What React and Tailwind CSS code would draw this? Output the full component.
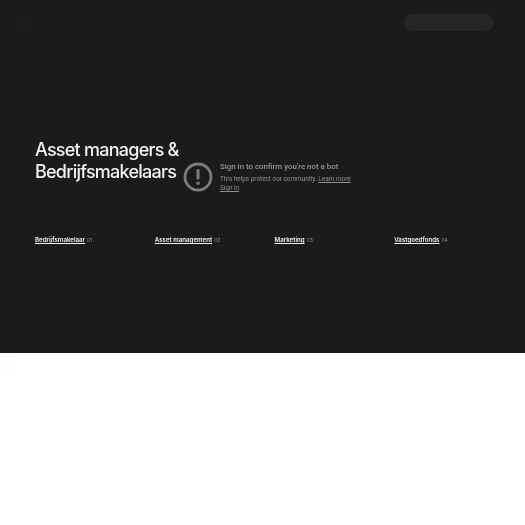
import React from 'react';

const tabs = [
    { label: 'Bedrijfsmakelaar', num: '01' },
    { label: 'Asset management', num: '02' },
    { label: 'Marketing', num: '03' },
    { label: 'Vastgoedfonds', num: '04' },
];

export default function App() {
    return (
        <div className="w-[525px] h-[525px] bg-white overflow-hidden font-['Inter',sans-serif]">
            <div className="h-[353px] bg-[#1b1b1b] flex flex-col">
                {/* Header */}
                <div className="flex justify-between items-start pt-[14px] pl-[16px] pr-[31px] h-[139px] shrink-0">
                    <div className="w-[20px] h-[20px] rounded-full bg-[#1d1d1d] blur-[2px]" />
                    <div className="w-[90px] h-[17px] rounded-full bg-[#262626] blur-[0.5px]" />
                </div>

                {/* Hero */}
                <div className="flex items-start pl-[35px] h-[96px] shrink-0">
                    <h1 className="text-[18px] leading-[22px] font-medium text-[#f2f2f2] tracking-[-0.76px] w-[148px] shrink-0 whitespace-nowrap blur-[0.3px]">
                        Asset managers &amp;<br />Bedrijfsmakelaars
                    </h1>
                    <div className="flex items-start gap-[7px] mt-[23px]">
                        <svg className="w-[30px] h-[30px] shrink-0 text-[#7b7b7b] blur-[0.3px]" viewBox="0 0 30 30" fill="none">
                            <circle cx="15" cy="15" r="13" stroke="currentColor" strokeWidth="2.8" />
                            <rect x="13.5" y="7" width="3" height="10.5" rx="1.2" fill="currentColor" />
                            <circle cx="15" cy="21.2" r="1.8" fill="currentColor" />
                        </svg>
                        <div className="flex flex-col -mt-[1px] font-['Roboto',sans-serif] blur-[0.3px]">
                            <div className="text-[7.9px] leading-[12px] font-medium text-[#969696] whitespace-nowrap">Sign in to confirm you're not a bot</div>
                            <div className="text-[6.4px] leading-[9px] text-[#8f8f8f] mt-[2px] whitespace-nowrap">
                                This helps protect our community. <span className="underline">Learn more</span>
                            </div>
                            <div className="text-[6.4px] leading-[9px] text-[#8f8f8f] underline">Sign in</div>
                        </div>
                    </div>
                </div>

                {/* Tabs */}
                <div className="grid grid-cols-4 pl-[35px] pr-[11px]">
                    {tabs.map((tab) => (
                        <div key={tab.label} className="flex items-baseline gap-[2px] text-[6.15px] leading-[10px] blur-[0.25px]">
                            <span className="font-semibold text-[#f0f0f0] underline whitespace-nowrap">{tab.label}</span>
                            <span className="text-[5px] text-[#8f8f8f]">{tab.num}</span>
                        </div>
                    ))}
                </div>
            </div>
            <div className="w-[14px] h-[15px] mt-[2px] bg-[#fdfdfd]" />
        </div>
    );
}
